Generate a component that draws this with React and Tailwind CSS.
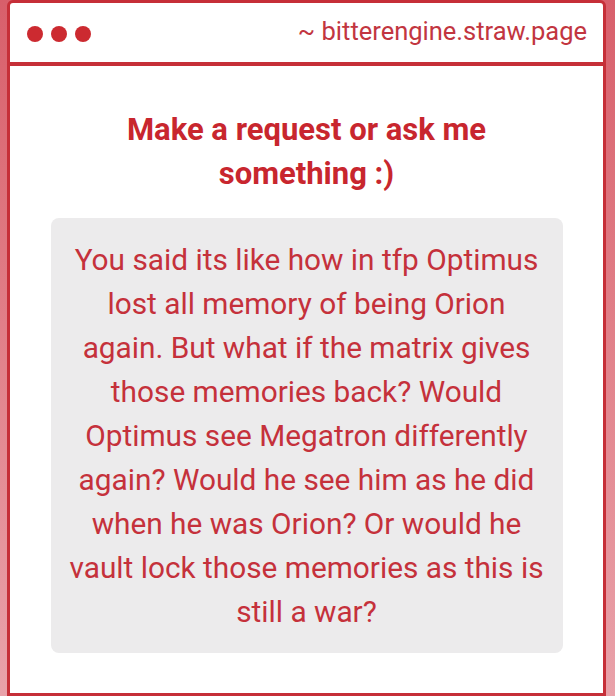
export default function App() {
  return (
    <div className="w-[615px] h-[696px] flex pl-[7px] pr-[9px] bg-gradient-to-b from-[#d85f6b] to-[#e9a2aa] font-['Roboto',sans-serif]">
      <div className="flex-1 flex flex-col bg-white border-[3px] border-[#c62f38] rounded-t-[6px] overflow-hidden">
        <div className="h-[59px] flex items-center justify-between pl-[17px] pr-[16px] shrink-0">
          <div className="flex gap-[8px] mt-[2px]">
            <span className="w-[16px] h-[16px] rounded-full bg-[#cc2a30]" />
            <span className="w-[16px] h-[16px] rounded-full bg-[#cc2a30]" />
            <span className="w-[16px] h-[16px] rounded-full bg-[#cc2a30]" />
          </div>
          <span className="text-[25.5px] text-[#c23540] leading-none mt-[-1px]">~ bitterengine.straw.page</span>
        </div>
        <div className="h-[4px] bg-[#c62f38] shrink-0" />
        <div className="flex-1 flex flex-col items-center pt-[42px]">
          <h1 className="text-[31px] font-bold text-[#c8262e] text-center leading-[44px] w-[440px]">
            Make a request or ask me something :)
          </h1>
          <div className="mt-[22px] w-[512px] bg-[#ecebec] rounded-[8px] px-[18px] pt-[20px] pb-[19px]">
            <p className="text-[29.8px] text-[#c5313b] text-center leading-[44px]">
              You said its like how in tfp Optimus lost all memory of being Orion again. But what if the matrix gives those memories back? Would Optimus see Megatron differently again? Would he see him as he did when he was Orion? Or would he vault lock those memories as this is still a war?
            </p>
          </div>
        </div>
      </div>
    </div>
  );
}
